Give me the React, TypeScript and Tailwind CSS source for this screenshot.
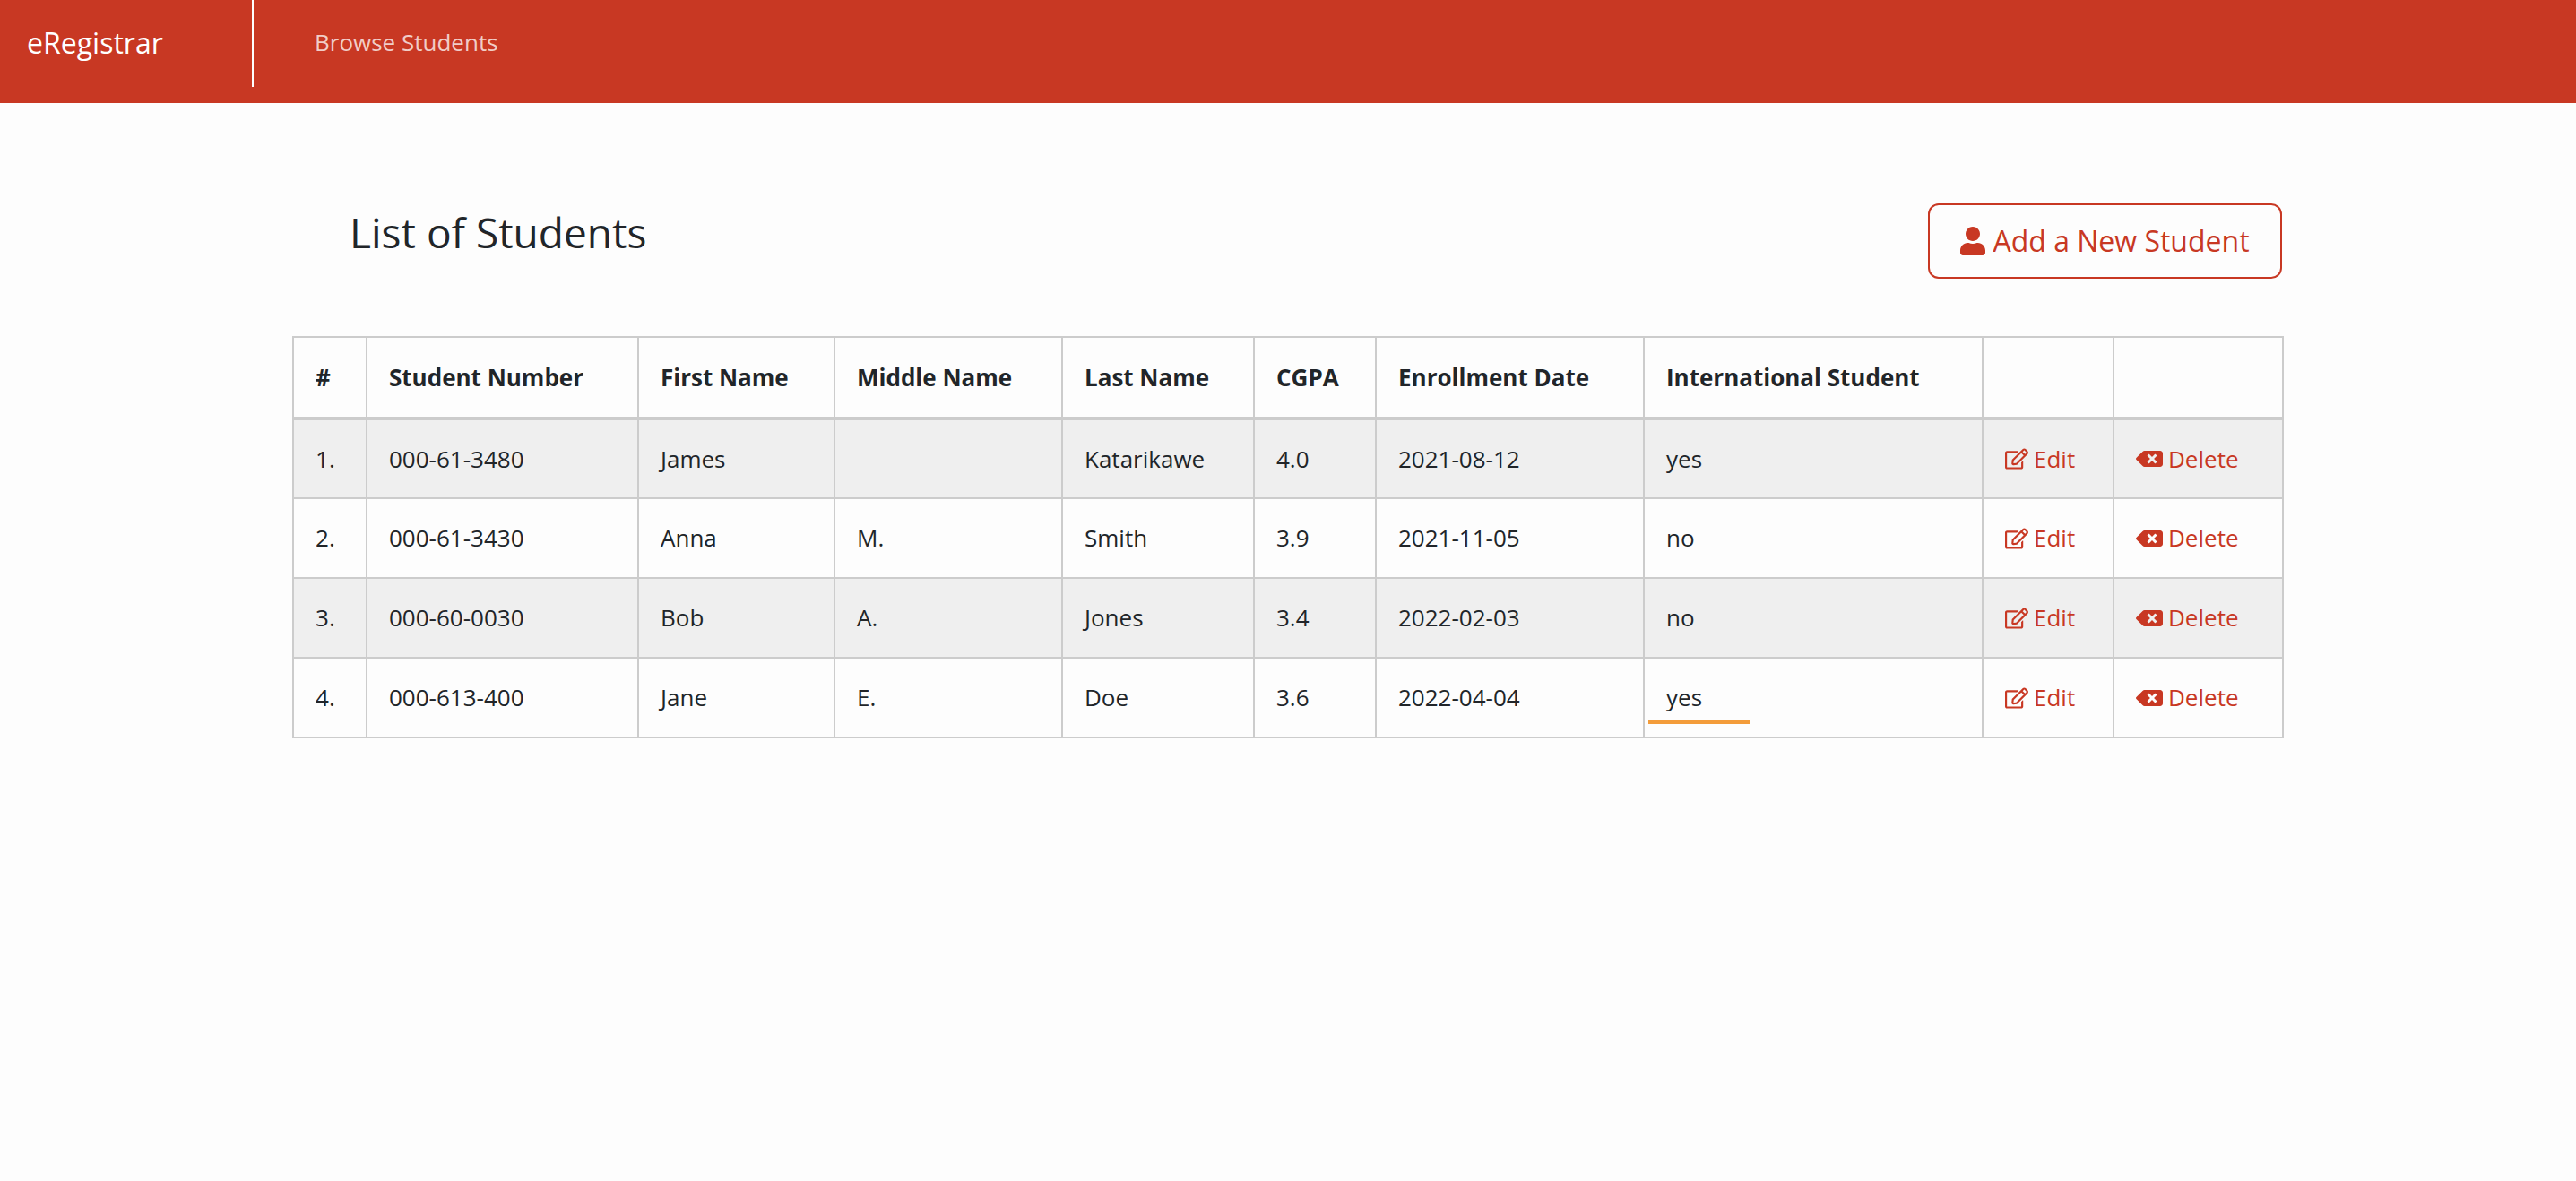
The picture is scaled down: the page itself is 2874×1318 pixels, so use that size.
import React from 'react';
import { FaUser, FaRegEdit, FaBackspace } from 'react-icons/fa';

type Student = {
  number: string;
  first: string;
  middle: string;
  last: string;
  cgpa: string;
  date: string;
  intl: string;
};

const students: Student[] = [
  { number: '000-61-3480', first: 'James', middle: '', last: 'Katarikawe', cgpa: '4.0', date: '2021-08-12', intl: 'yes' },
  { number: '000-61-3430', first: 'Anna', middle: 'M.', last: 'Smith', cgpa: '3.9', date: '2021-11-05', intl: 'no' },
  { number: '000-60-0030', first: 'Bob', middle: 'A.', last: 'Jones', cgpa: '3.4', date: '2022-02-03', intl: 'no' },
  { number: '000-613-400', first: 'Jane', middle: 'E.', last: 'Doe', cgpa: '3.6', date: '2022-04-04', intl: 'yes' },
];

const headers = ['#', 'Student Number', 'First Name', 'Middle Name', 'Last Name', 'CGPA', 'Enrollment Date', 'International Student', '', ''];

const th = 'border-2 border-[#cccccc] border-b-4 px-6 text-left font-bold';
const td = 'border-2 border-[#cccccc] px-6 font-normal';

const App: React.FC = () => {
  return (
    <div className="min-h-screen bg-[#fdfdfd] font-['Open_Sans',sans-serif] text-[26px] text-[#212529]">
      <nav className="flex h-[115px] items-start bg-[#c83823]">
        <div className="flex h-[97px] w-[283px] items-center border-r-2 border-white pb-[2px] pl-[30px] text-[32px] text-white">
          eRegistrar
        </div>
        <div className="flex h-[97px] items-center pb-[2px] pl-[68px] text-[26px] text-white/75">
          Browse Students
        </div>
      </nav>

      <main className="ml-[326px] w-[2220px]">
        <div className="flex h-[260px] items-start justify-between pt-[112px]">
          <h1 className="pl-[64px] text-[46px] leading-[64px]">List of Students</h1>
          <button className="flex h-[84px] w-[395px] items-center justify-center gap-[8px] rounded-[12px] border-2 border-[#c83823] text-[32px] text-[#c83823]">
            <FaUser className="h-[32px] w-[28px]" />
            Add a New Student
          </button>
        </div>

        <table className="w-[2220px] table-fixed border-collapse">
          <colgroup>
            <col className="w-[82px]" />
            <col className="w-[303px]" />
            <col className="w-[219px]" />
            <col className="w-[254px]" />
            <col className="w-[214px]" />
            <col className="w-[136px]" />
            <col className="w-[299px]" />
            <col className="w-[378px]" />
            <col className="w-[146px]" />
            <col className="w-[189px]" />
          </colgroup>
          <thead>
            <tr className="h-[91px]">
              {headers.map((h, i) => (
                <th key={i} className={th}>
                  {h}
                </th>
              ))}
            </tr>
          </thead>
          <tbody>
            {students.map((s, i) => (
              <tr key={s.number} className={i % 2 === 0 ? 'h-[89px] bg-[#efefef]' : 'h-[89px]'}>
                <td className={`${td} font-bold`}>{i + 1}.</td>
                <td className={td}>{s.number}</td>
                <td className={td}>{s.first}</td>
                <td className={td}>{s.middle}</td>
                <td className={td}>{s.last}</td>
                <td className={td}>{s.cgpa}</td>
                <td className={td}>{s.date}</td>
                <td className={`${td} relative`}>
                  {s.intl}
                  {i === 3 && <span className="absolute bottom-[14px] left-[4px] h-[4px] w-[114px] bg-[#f39c3a]" />}
                </td>
                <td className={`${td} text-[#c83823]`}>
                  <span className="flex items-center gap-[6px]">
                    <FaRegEdit className="h-[26px] w-[26px]" />
                    Edit
                  </span>
                </td>
                <td className={`${td} text-[#c83823]`}>
                  <span className="flex items-center gap-[6px]">
                    <FaBackspace className="h-[26px] w-[30px]" />
                    Delete
                  </span>
                </td>
              </tr>
            ))}
          </tbody>
        </table>
      </main>
    </div>
  );
};

export default App;
